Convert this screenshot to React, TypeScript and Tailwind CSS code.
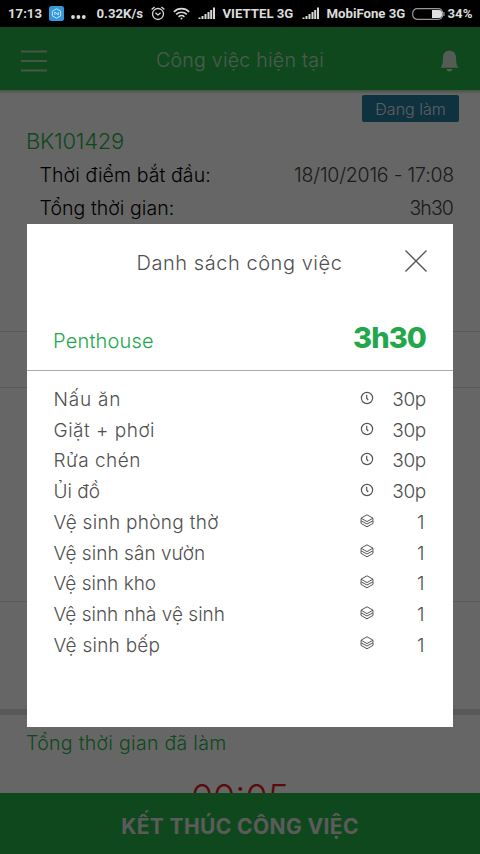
import React from "react";

type Job = { name: string; value: string; type: "time" | "count"; tracking: string };

const jobs: Job[] = [
  { name: "Nấu ăn", value: "30p", type: "time", tracking: "tracking-[0.8px]" },
  { name: "Giặt + phơi", value: "30p", type: "time", tracking: "tracking-[0.5px]" },
  { name: "Rửa chén", value: "30p", type: "time", tracking: "tracking-[0.5px]" },
  { name: "Ủi đồ", value: "30p", type: "time", tracking: "tracking-[0px]" },
  { name: "Vệ sinh phòng thờ", value: "1", type: "count", tracking: "tracking-[0.3px]" },
  { name: "Vệ sinh sân vườn", value: "1", type: "count", tracking: "tracking-[0.05px]" },
  { name: "Vệ sinh kho", value: "1", type: "count", tracking: "tracking-[0px]" },
  { name: "Vệ sinh nhà vệ sinh", value: "1", type: "count", tracking: "tracking-[0px]" },
  { name: "Vệ sinh bếp", value: "1", type: "count", tracking: "tracking-[0.25px]" },
];

const SignalIcon = () => (
  <svg width="18" height="13" viewBox="0 0 18 13" fill="#d8d8d8">
    <rect x="0.5" y="10.5" width="2" height="1.5" />
    <rect x="3.5" y="9" width="2" height="3" />
    <rect x="6.5" y="7" width="2" height="5" />
    <rect x="9.5" y="5" width="2" height="7" />
    <rect x="12.2" y="3" width="2" height="9" />
    <rect x="15" y="0.5" width="2" height="11.5" />
  </svg>
);

const ClockIcon = () => (
  <svg width="14" height="14" viewBox="0 0 14 14" fill="none" stroke="#555" strokeWidth="1.2">
    <circle cx="7" cy="7" r="5.6" />
    <path d="M6.7 3.8v3.4l1.5 2" />
  </svg>
);

const LayersIcon = () => (
  <svg width="14" height="14" viewBox="0 0 14 14" fill="none" stroke="#555" strokeWidth="1" strokeLinejoin="round">
    <path d="M7 0.8l6 3.4L7 7.6 1 4.2z" />
    <path d="M1 4.4v2.4L7 10l6-3.2V4.4" />
    <path d="M1 7v2.4L7 12.8l6-3.4V7" />
  </svg>
);

const StatusBar = () => (
  <div className="flex h-[27px] shrink-0 items-center bg-black pl-2 font-[Roboto] text-[13.2px] font-bold whitespace-nowrap text-[#dcdcdc]">
    <span className="w-[41px]">17:13</span>
    <svg className="shrink-0" width="15" height="15" viewBox="0 0 15 15">
      <rect width="15" height="15" rx="2.5" fill="#3598dc" />
      <path d="M7.5 2.8l4.1 2.3v4.8l-4.1 2.3-4.1-2.3V5.1z" fill="none" stroke="#c8e4f6" />
      <path d="M5.8 9V6l3.4 3V6" fill="none" stroke="#c8e4f6" />
    </svg>
    <svg className="mt-[7px] ml-[7px] shrink-0" width="15" height="4" viewBox="0 0 15 4" fill="#dcdcdc">
      <circle cx="2" cy="2" r="1.9" />
      <circle cx="7.4" cy="2" r="1.9" />
      <circle cx="12.8" cy="2" r="1.9" />
    </svg>
    <span className="ml-[10.5px] w-[55px]">0.32K/s</span>
    <svg className="-ml-px shrink-0" width="14" height="15" viewBox="0 0 14 15" fill="none" stroke="#d8d8d8" strokeWidth="1.3">
      <circle cx="7" cy="8" r="5.5" />
      <path d="M4.4 6.8L7 9l2.6-2.2M0.6 3.6L3.6 1M13.4 3.6L10.4 1" />
    </svg>
    <svg className="ml-2 shrink-0" width="17" height="13" viewBox="0 0 17 13" fill="none" stroke="#d8d8d8" strokeWidth="1.7">
      <path d="M0.8 4.8a11 11 0 0 1 15.4 0M3.2 7.4a7.6 7.6 0 0 1 10.6 0M5.6 9.8a4.2 4.2 0 0 1 5.8 0" />
      <circle cx="8.5" cy="11.6" r="1" fill="#d8d8d8" stroke="none" />
    </svg>
    <span className="ml-2 w-[25px]"><SignalIcon /></span>
    <span className="w-[79px]">VIETTEL 3G</span>
    <span className="w-[25px]"><SignalIcon /></span>
    <span className="w-[85px]">MobiFone 3G</span>
    <svg className="shrink-0" width="33" height="12" viewBox="0 0 33 12">
      <rect x="0.7" y="0.7" width="30" height="10.6" rx="4.5" fill="none" stroke="#999" strokeWidth="1.2" />
      <path d="M20 2h7a3 3 0 0 1 3 3v2a3 3 0 0 1-3 3h-7z" fill="#e0e0e0" />
      <path d="M32 4v4" stroke="#999" strokeWidth="1.2" />
    </svg>
    <span className="ml-[3px]">34%</span>
  </div>
);

const CurrentJob = () => (
  <div className="flex flex-1 flex-col bg-white font-light whitespace-nowrap text-black">
    {/* Header */}
    <div className="flex h-[63px] shrink-0 items-center justify-between bg-[#28b44b] pt-1 pr-[21px] pl-[21px] text-[#f0f0f0]">
      <svg width="26" height="24" viewBox="0 0 26 24" stroke="#f0f0f0" strokeWidth="1.8" strokeOpacity="0.65">
        <path d="M0 2.5h26M0 12h26M0 21.5h26" />
      </svg>
      <span className="mr-[7px] text-[19.5px] tracking-[0.27px] opacity-75">Công việc hiện tại</span>
      <svg width="19" height="22" viewBox="0 0 19 22" fill="#eee" fillOpacity="0.85">
        <path d="M9.5 0.5C13.5 0.8 16 3.3 16 7.5c0 6 0.8 8 2.5 10.3H0.5C2.2 15.5 3 13.5 3 7.5 3 3.3 5.5 0.8 9.5 0.5z" />
        <path d="M6.7 19h5.6a2.8 2.3 0 0 1-5.6 0z" />
      </svg>
    </div>
    <div className="h-1 shrink-0 bg-gradient-to-b from-[#a5d6b0] to-white" />

    {/* Booking info */}
    <div className="flex h-[238px] shrink-0 flex-col border-b border-[#e2e2e2]">
      <div className="mt-px mr-[21px] flex h-[27px] w-[97px] items-center justify-center self-end rounded-[2px] bg-[#267da2] text-[16px] text-[#e8e8e8]">
        Đang làm
      </div>
      <div className="mt-[5px] pl-[26px] text-[22px] leading-7 tracking-[-0.25px] text-[#28b44b]">BK101429</div>
      <div className="mt-1 flex h-[33px] items-center justify-between pr-[26px] pl-[39.5px] text-[19.5px]">
        <span className="tracking-[0.1px]">Thời điểm bắt đầu:</span>
        <span className="tracking-[-0.2px] text-[#444]">18/10/2016 - 17:08</span>
      </div>
      <div className="flex h-[33px] items-center justify-between pr-[27px] pl-[39.5px] text-[19.5px]">
        <span className="tracking-[0.05px]">Tổng thời gian:</span>
        <span className="tracking-[-0.9px] text-[#444]">3h30</span>
      </div>
    </div>
    <div className="h-14 shrink-0 border-b border-[#e2e2e2]" />
    <div className="h-[214px] shrink-0 border-b border-[#e2e2e2]" />
    <div className="h-[113px] shrink-0 border-b-[6px] border-[#dedede]" />

    {/* Worked time */}
    <div className="flex h-[78px] shrink-0 flex-col overflow-hidden pl-[26px]">
      <span className="mt-[14px] text-[19.5px] leading-7 tracking-[0.3px] text-[#28b44b]">Tổng thời gian đã làm</span>
      <span className="mt-[20px] mr-[26px] text-center text-[36px] leading-10 text-[#e02020]">00:05</span>
    </div>
    <button className="h-[61px] w-full shrink-0 bg-[#28b44b] pt-1.5 text-[21px] font-bold tracking-[0.38px] text-[#e4e4e4]">
      KẾT THÚC CÔNG VIỆC
    </button>
  </div>
);

const JobListModal = () => (
  <div className="absolute inset-x-0 top-[27px] bottom-0 flex flex-col bg-black/60 px-[27px] pt-[197px]">
    <div className="h-[503px] bg-white font-light whitespace-nowrap text-[#505050]">
      <div className="flex h-[147px] flex-col border-b border-[#aaa]">
        <div className="flex h-[76px] items-center justify-between pr-[26px] pl-[109.5px]">
          <span className="mt-[5px] text-[20px] tracking-[0.55px]">Danh sách công việc</span>
          <svg width="22" height="22" viewBox="0 0 22 22" stroke="#555" strokeWidth="1.4">
            <path d="M0.5 0.5l21 21M21.5 0.5l-21 21" />
          </svg>
        </div>
        <div className="flex h-[74px] items-center justify-between pr-[27px] pl-[26px] text-[#22a84a]">
          <span className="mt-[14px] text-[20px] tracking-[0.2px]">Penthouse</span>
          <span className="mt-[7px] text-[29px] font-extrabold tracking-[-0.9px]">3h30</span>
        </div>
      </div>
      <div className="flex flex-col pt-[14px] pr-[27px] pl-[26.5px]">
        {jobs.map((job) => (
          <div key={job.name} className="flex h-[30.7px] items-center text-[19px]">
            <span className={`flex-1 ${job.tracking}`}>{job.name}</span>
            <span className="-mt-[5px]">{job.type === "time" ? <ClockIcon /> : <LayersIcon />}</span>
            <span className={job.type === "time" ? "w-[52px] text-right tracking-[-0.3px]" : "w-[52px] pr-[1.5px] text-right"}>
              {job.value}
            </span>
          </div>
        ))}
      </div>
    </div>
  </div>
);

const App: React.FC = () => {
  return (
    <div className="relative flex h-[854px] w-[480px] flex-col overflow-hidden font-[Inter,sans-serif]">
      <StatusBar />
      <CurrentJob />
      <JobListModal />
    </div>
  );
};

export default App;
